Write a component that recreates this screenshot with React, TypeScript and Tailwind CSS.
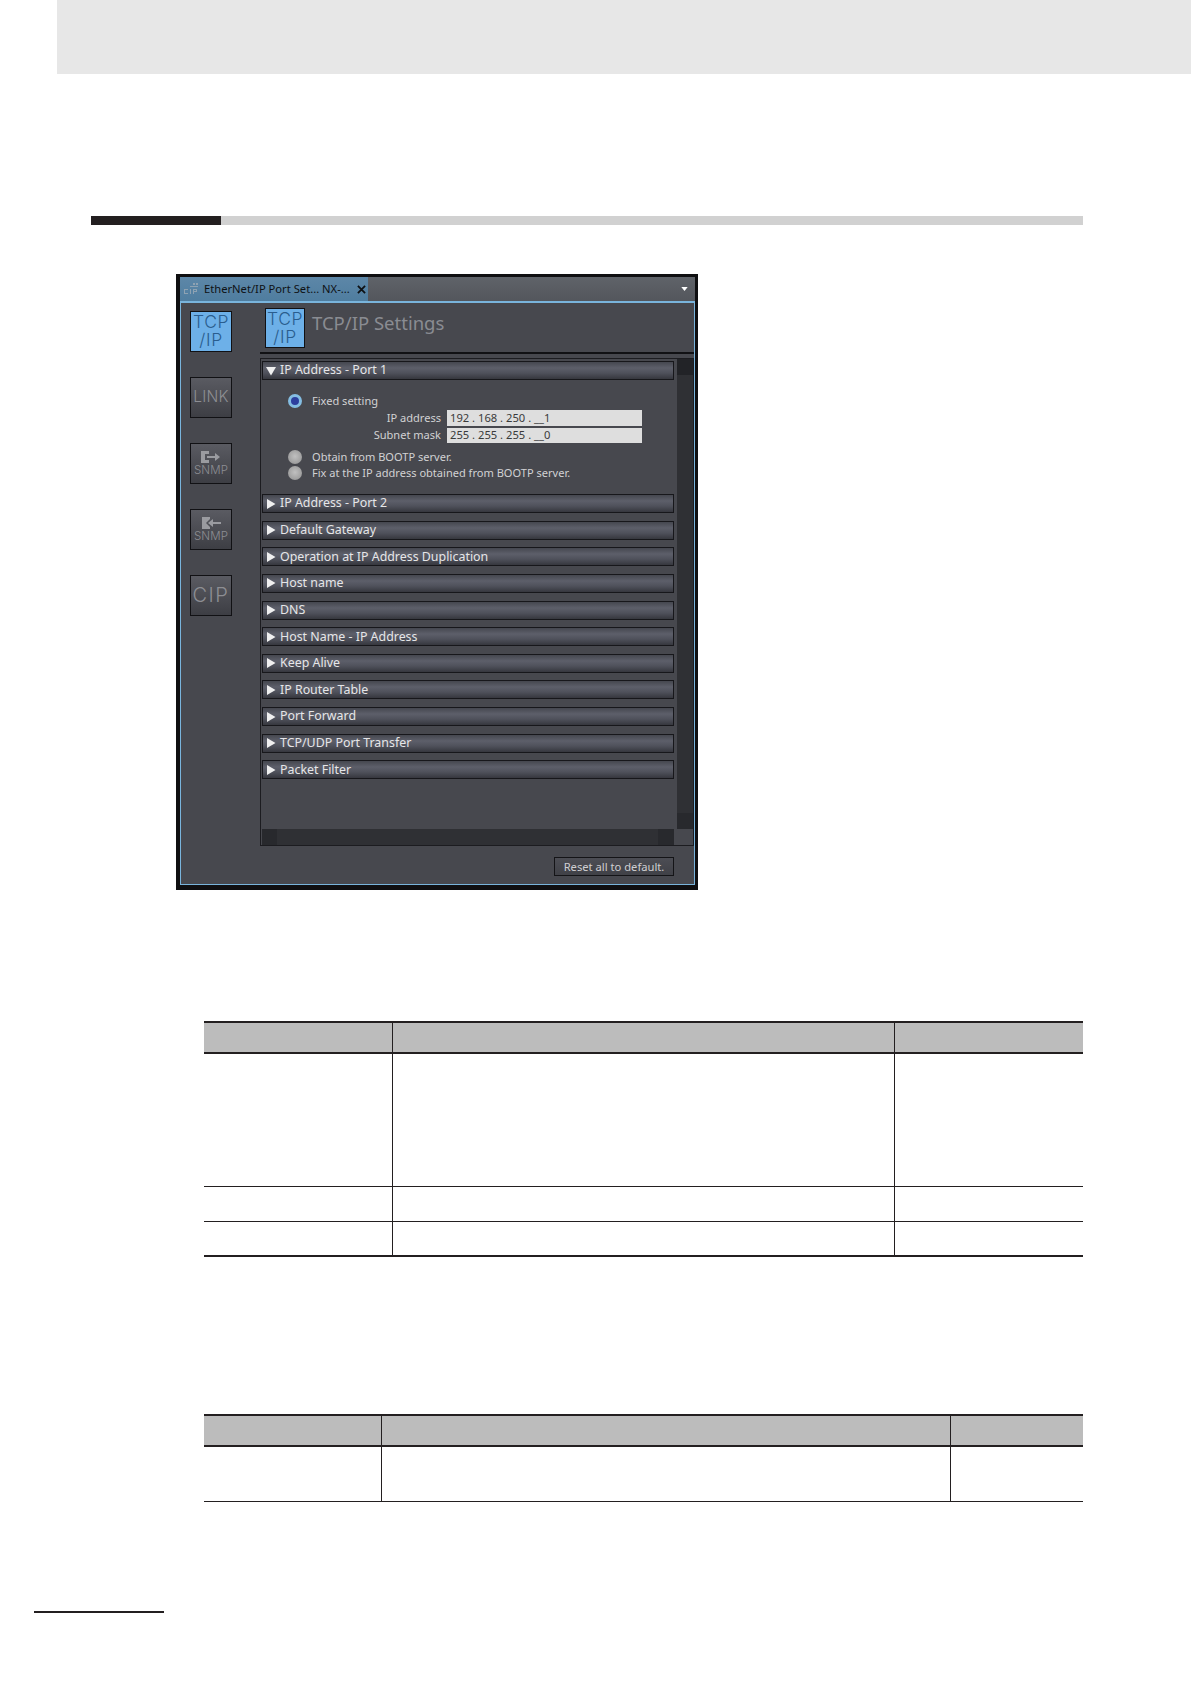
const UI = `font-['Noto_Sans',sans-serif]`;

const ROWS = ['IP Address - Port 2','Default Gateway','Operation at IP Address Duplication','Host name','DNS','Host Name - IP Address','Keep Alive','IP Router Table','Port Forward','TCP/UDP Port Transfer','Packet Filter'];

function Row({ label, open = false, first = false }: { label: string; open?: boolean; first?: boolean }) {
  return (
    <div className={`flex items-center h-[19px] w-[412px] shrink-0 border border-[#17171b] bg-[linear-gradient(#45474f,#5d5f6a_35%,#4f515b_65%,#36373e)] ${first ? '' : 'mt-[7.65px]'}`}>
      <svg viewBox="0 0 10 10" className="w-[10px] h-[10px] ml-[3px] mr-[4px] fill-[#f0f0f0]">
        {open ? <path d="M0 1h10L5 9.500z" /> : <path d="M1 0l8.500 5L1 10z" />}
      </svg>
      <span className="text-[12.400px] leading-none text-[#e6e6e8] whitespace-nowrap">{label}</span>
    </div>
  );
}

function Radio({ on = false, label }: { on?: boolean; label: string }) {
  return (
    <div className="flex items-center h-[16px] pl-[26px]">
      {on
        ? <div className="w-[14px] h-[14px] rounded-full border-[3px] border-[#84bde2] bg-[#2c3f9e] shrink-0" />
        : <div className="w-[14px] h-[14px] rounded-full bg-[radial-gradient(circle_at_50%_45%,#c0c0c0,#8f8f8f)] shrink-0" />}
      <span className="ml-[10px] text-[11.050px] leading-none text-[#d2d2d4] whitespace-nowrap">{label}</span>
    </div>
  );
}

function Field({ label, value, h, mt }: { label: string; value: string; h: string; mt: string }) {
  return (
    <div className={`flex items-center ${mt}`}>
      <span className="w-[179px] text-right text-[11.050px] leading-none text-[#d2d2d4]">{label}</span>
      <div className={`ml-[6px] w-[195px] ${h} bg-[#dedede] pl-[3px] flex items-center text-[11.200px] leading-none text-[#3a3a3a] whitespace-pre`}>{value}</div>
    </div>
  );
}

function Tile({ active = false, children }: { active?: boolean; children: React.ReactNode }) {
  return (
    <div className={`w-[42px] h-[41px] border border-[#111114] flex flex-col items-center justify-center overflow-hidden font-['Inter',sans-serif] font-light ${active ? 'bg-[#6db0e8] text-[#2a5d8e]' : 'bg-[linear-gradient(#5a5b62,#3d3e44)] text-[#8d8e93]'}`}>
      {children}
    </div>
  );
}

function TcpIp() {
  return (<>
    <div className="text-[17.500px] leading-[18px] tracking-[0.6px]">TCP</div>
    <div className="text-[17.500px] leading-[18px] tracking-[0.6px]">/IP</div>
  </>);
}

function Snmp({ flip = false }: { flip?: boolean }) {
  return (<>
    <svg viewBox="0 0 22 14" className="w-[22px] h-[14px] fill-[#9a9ba0]">
      {flip
        ? <path d="M2 1h8v2L6 7l4 4v2H2zM8 7l5-4v3h8v2h-8v3z" />
        : <path d="M1 1h8v3H5v6h4v3H1zM20 7l-5-4v3H7v2h8v3z" />}
    </svg>
    <div className="text-[11.500px] leading-[12px] tracking-[0.1px]">SNMP</div>
  </>);
}

function Table({ cols, rows }: { cols: string; rows: { h: string; border: string }[] }) {
  return (
    <div className="ml-[204px] w-[879px]">
      <div className={`grid ${cols} h-[33px] border-y-2 border-[#231f20] bg-[#bcbcbc]`}>
        <div /><div className="border-x border-[#231f20]" /><div />
      </div>
      {rows.map((r, i) => (
        <div key={i} className={`grid ${cols} ${r.h} ${r.border} border-[#231f20]`}>
          <div /><div className="border-x border-[#231f20]" /><div />
        </div>
      ))}
    </div>
  );
}

export default function App() {
  return (
    <div className="w-[1191px] h-[1684px] bg-white overflow-hidden">
      <div className="ml-[57px] h-[74px] bg-[#e7e7e7]" />
      <div className="ml-[91px] mt-[142px] w-[992px] h-[9px] flex bg-[#d1d1d1]">
        <div className="w-[130px] bg-[#231f20]" />
      </div>

      {/* app window */}
      <div className={`ml-[176px] mt-[49px] w-[522px] h-[616px] border-l-4 border-t-[3px] border-r-[3px] border-b-[5px] border-[#0f0f11] flex flex-col bg-[#47484e] ${UI}`}>
        <div className="h-[24px] shrink-0 flex bg-[linear-gradient(#5f6369,#53565c)]">
          <div className="w-[188px] flex items-center pl-[4px] bg-[linear-gradient(#5d87a8,#4f7d9f)]">
            <svg viewBox="0 0 16 12" className="w-[16px] h-[12px] shrink-0 fill-[#8ea2b2]">
              <path d="M9 0h2v2H9zM12 0h2v2h-2zM6 3h8v1H6zM0 6h4v1H1v3h3v1H0zM6 6h1v5H6zM9 6h4v3h-3v2H9zM10 7v1h2V7z" />
            </svg>
            <span className="ml-[4px] text-[11.200px] leading-none text-[#0e1114] whitespace-nowrap">EtherNet/IP Port Set... NX-...</span>
            <svg viewBox="0 0 10 10" className="ml-[7px] w-[9px] h-[9px] stroke-[#0e1114] stroke-[2] fill-none shrink-0"><path d="M1 1l8 8M9 1l-8 8" /></svg>
          </div>
          <div className="flex-1 flex items-center justify-end pr-[7px]">
            <svg viewBox="0 0 8 5" className="w-[7px] h-[4px] fill-white"><path d="M0 0h8L4 5z" /></svg>
          </div>
        </div>

        <div className="flex-1 flex border-x border-b border-t-2 border-[#79b4dc] min-h-0">
          {/* side tabs */}
          <div className="w-[79px] shrink-0 pl-[9px] pt-[7.500px] flex flex-col gap-[25px]">
            <Tile active><TcpIp /></Tile>
            <Tile><div className="text-[15.500px] tracking-[0.2px]">LINK</div></Tile>
            <Tile><Snmp /></Tile>
            <Tile><Snmp flip /></Tile>
            <Tile><div className="text-[20px] tracking-[1.5px]">CIP</div></Tile>
          </div>

          <div className="flex-1 flex flex-col min-w-0">
            <div className="h-[49px] shrink-0 flex pl-[5px] pt-[5px]">
              <div className="w-[40px] h-[40px] border border-[#111114] bg-[#6db0e8] text-[#2a5d8e] flex flex-col items-center justify-center overflow-hidden font-['Inter',sans-serif] font-light"><TcpIp /></div>
              <span className="ml-[7px] mt-[1px] text-[18.500px] leading-[28px] text-[#8a8c92] whitespace-nowrap">TCP/IP Settings</span>
            </div>
            <div className="h-[2px] bg-[#111114] shrink-0" />

            <div className="mt-[4px] h-[488px] w-[434px] shrink-0 border border-[#1c1c20] flex flex-col">
              <div className="flex-1 flex min-h-0">
                <div className="w-[416px] pl-[1px] pt-[2px] flex flex-col">
                  <Row label="IP Address - Port 1" open first />
                  <div className="pt-[13px] pb-[13px]">
                    <Radio on label="Fixed setting" />
                    <Field mt="mt-[1px]" h="h-[16px]" label="IP address" value="192 . 168 . 250 . __1" />
                    <Field mt="mt-[1.500px]" h="h-[15px]" label="Subnet mask" value="255 . 255 . 255 . __0" />
                    <div className="mt-[6.500px]"><Radio label="Obtain from BOOTP server." /></div>
                    <Radio label="Fix at the IP address obtained from BOOTP server." />
                  </div>
                  {ROWS.map((r, i) => <Row key={r} label={r} first={i === 0} />)}
                </div>
                <div className="w-[16px] flex flex-col bg-[#2f3034]">
                  <div className="h-[16px] bg-[#222327]" />
                  <div className="flex-1" />
                  <div className="h-[16px] bg-[#28292d]" />
                </div>
              </div>
              <div className="h-[16px] shrink-0 flex pl-[1px]">
                <div className="w-[15px] bg-[#28292d]" />
                <div className="w-[381px] bg-[#2f3034]" />
                <div className="w-[16px] bg-[#28292d]" />
              </div>
            </div>

            <div className="mt-[11px] flex justify-end pr-[20px]">
              <div className="w-[120px] h-[19px] border border-[#141417] bg-[linear-gradient(#4c4d54,#404147)] flex items-center justify-center text-[11.200px] leading-none text-[#cfcfd2]">Reset all to default.</div>
            </div>
          </div>
        </div>
      </div>

      <div className="mt-[131px]">
        <Table cols="grid-cols-[188px_503px_188px]" rows={[
          { h: 'h-[133px]', border: 'border-b' },
          { h: 'h-[35px]', border: 'border-b' },
          { h: 'h-[35px]', border: 'border-b-2' },
        ]} />
      </div>
      <div className="mt-[157px]">
        <Table cols="grid-cols-[177px_570px_132px]" rows={[
          { h: 'h-[55px]', border: 'border-b' },
        ]} />
      </div>
      <div className="ml-[34px] mt-[109px] w-[130px] h-[2px] bg-[#231f20]" />
    </div>
  );
}
